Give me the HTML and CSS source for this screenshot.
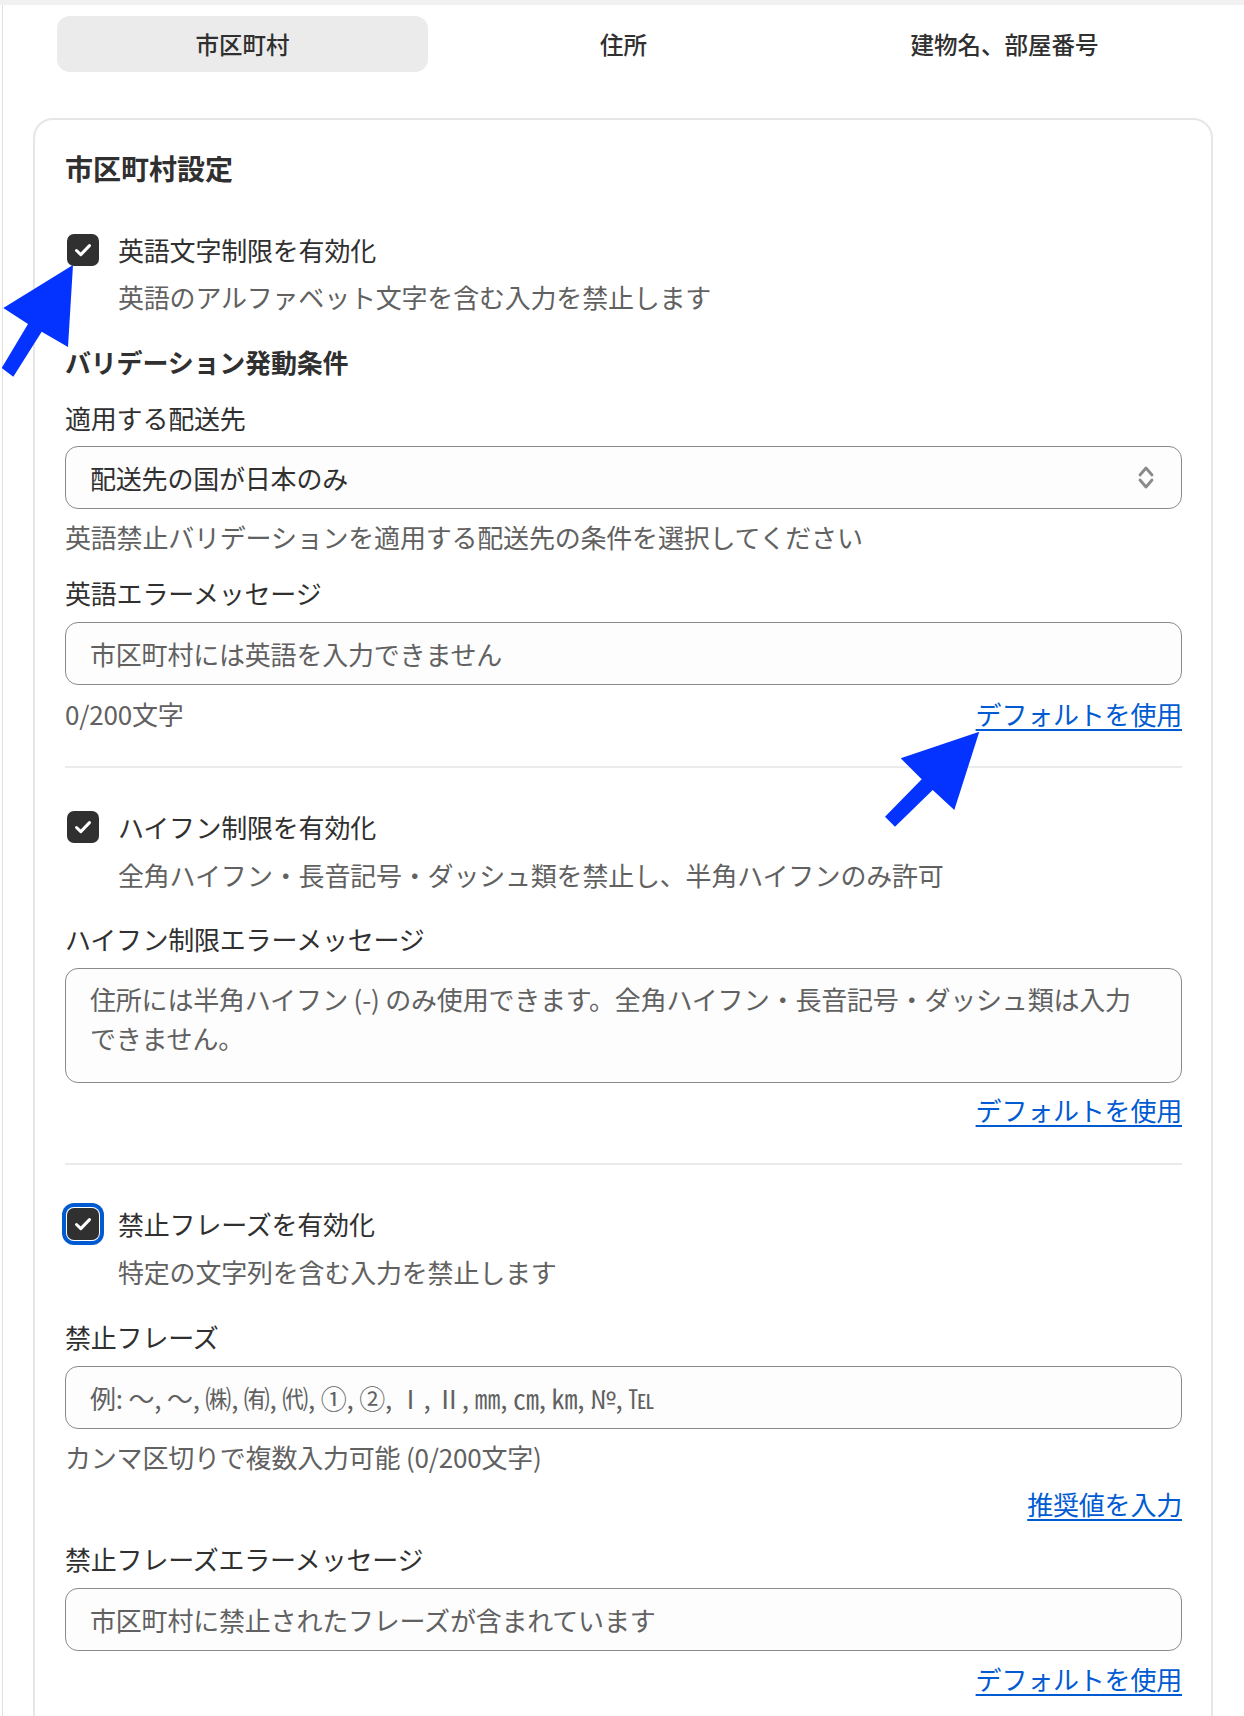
FILE: index.html
```html
<!DOCTYPE html>
<html lang="ja">
<head>
<meta charset="utf-8">
<title>市区町村設定</title>
<link rel="stylesheet" href="styles.css">
</head>
<body>
<div class="topband"></div>
<div class="panel">
  <div class="tabs">
    <div class="tab tab-active">市区町村</div>
    <div class="tab">住所</div>
    <div class="tab">建物名、部屋番号</div>
  </div>

  <div class="card">
    <h2 class="card-title">市区町村設定</h2>

    <div class="check-row mt-44">
      <span class="checkbox">
        <svg viewBox="0 0 32 32" width="32" height="32"><path d="M9.5 16.5 L13.8 20.6 L22.5 11.6" fill="none" stroke="#fff" stroke-width="3" stroke-linecap="round" stroke-linejoin="round"/></svg>
      </span>
      <span class="text">英語文字制限を有効化</span>
    </div>
    <div class="desc mt-11">英語のアルファベット文字を含む入力を禁止します</div>

    <div class="subhead mt-29">バリデーション発動条件</div>
    <div class="label mt-20">適用する配送先</div>
    <div class="control select mt-10">
      <span class="value">配送先の国が日本のみ</span>
      <svg class="chev" viewBox="0 0 16 25" width="16" height="25"><path d="M2 10 L8 3 L14 10 M2 15 L8 22 L14 15" fill="none" stroke="#8a8a8a" stroke-width="2.8" stroke-linecap="round" stroke-linejoin="round"/></svg>
    </div>
    <div class="help mt-10">英語禁止バリデーションを適用する配送先の条件を選択してください</div>

    <div class="label mt-20">英語エラーメッセージ</div>
    <div class="control input mt-11"><span class="ph">市区町村には英語を入力できません</span></div>
    <div class="meta-row mt-11">
      <span class="help">0/200文字</span>
      <a class="link" href="#">デフォルトを使用</a>
    </div>

    <div class="divider mt-34"></div>

    <div class="check-row mt-41">
      <span class="checkbox">
        <svg viewBox="0 0 32 32" width="32" height="32"><path d="M9.5 16.5 L13.8 20.6 L22.5 11.6" fill="none" stroke="#fff" stroke-width="3" stroke-linecap="round" stroke-linejoin="round"/></svg>
      </span>
      <span class="text">ハイフン制限を有効化</span>
    </div>
    <div class="desc mt-12">全角ハイフン・長音記号・ダッシュ類を禁止し、半角ハイフンのみ許可</div>

    <div class="label mt-28">ハイフン制限エラーメッセージ</div>
    <div class="control textarea mt-11"><span class="ph">住所には半角ハイフン (-) のみ使用できます。全角ハイフン・長音記号・ダッシュ類は入力<br>できません。</span></div>
    <div class="link-row mt-9"><a class="link" href="#">デフォルトを使用</a></div>

    <div class="divider mt-35"></div>

    <div class="check-row mt-41">
      <span class="checkbox focused">
        <svg viewBox="0 0 32 32" width="32" height="32"><path d="M9.5 16.5 L13.8 20.6 L22.5 11.6" fill="none" stroke="#fff" stroke-width="3" stroke-linecap="round" stroke-linejoin="round"/></svg>
      </span>
      <span class="text">禁止フレーズを有効化</span>
    </div>
    <div class="desc mt-12">特定の文字列を含む入力を禁止します</div>

    <div class="label mt-29">禁止フレーズ</div>
    <div class="control input mt-11"><span class="ph">例: ～, 〜, ㈱, ㈲, ㈹, ①, ②, Ⅰ, Ⅱ, ㎜, ㎝, ㎞, №, ℡</span></div>
    <div class="help mt-10">カンマ区切りで複数入力可能 (0/200文字)</div>
    <div class="link-row mt-11"><a class="link" href="#">推奨値を入力</a></div>

    <div class="label mt-19">禁止フレーズエラーメッセージ</div>
    <div class="control input mt-11"><span class="ph">市区町村に禁止されたフレーズが含まれています</span></div>
    <div class="link-row mt-10"><a class="link" href="#">デフォルトを使用</a></div>
  </div>
</div>

<svg class="annotations" viewBox="0 0 1244 1716" width="1244" height="1716">
  <polygon points="73,265 68,347 41.7,331.7 13.3,376.7 1.7,368 28,324 3.3,308" fill="#0433ff"/>
  <polygon points="979.3,731.7 954.3,810 932.7,790 895,826.7 885,816.7 921.7,779.3 900.7,758.3" fill="#0433ff"/>
</svg>
</body>
</html>
```

FILE: styles.css
```css
html, body {
  margin: 0;
  padding: 0;
  background: #ffffff;
}

body {
  font-family: "Noto Sans CJK JP", "Noto Sans", "Liberation Sans", sans-serif;
  color: #303030;
  font-size: 26px;
  line-height: 36px;
  letter-spacing: -0.2px;
  position: relative;
  overflow: hidden;
  height: 1716px;
}

.topband {
  height: 5px;
  background: #f1f1f1;
}

.panel {
  margin-left: 2px;
  border-left: 1px solid #e0e0e0;
  padding: 11px 0 0 30px;
  min-height: 1711px;
  box-sizing: border-box;
}

.tabs {
  margin-left: 24px;
  display: grid;
  grid-template-columns: 371px 371px 371px;
  column-gap: 10px;
}

.tab {
  height: 56px;
  border-radius: 13px;
  display: flex;
  align-items: center;
  justify-content: center;
  font-size: 23.5px;
  font-weight: 500;
  letter-spacing: 0;
  color: #303030;
}

.tab-active {
  background: #ebebeb;
}

.card {
  margin-top: 46px;
  width: 1180px;
  box-sizing: border-box;
  border: 2px solid #e6e6e6;
  border-radius: 20px;
  padding: 28px 29px 40px 30px;
}

.card-title {
  margin: 0;
  font-size: 28px;
  line-height: 40px;
  font-weight: 700;
  letter-spacing: 0;
  color: #303030;
}

.check-row {
  display: flex;
  align-items: center;
  height: 36px;
}

.checkbox {
  width: 32px;
  height: 32px;
  margin-left: 2px;
  margin-right: 19px;
  border-radius: 7px;
  background: #303030;
  display: flex;
  align-items: center;
  justify-content: center;
  flex: none;
}

.checkbox svg {
  display: block;
}

.checkbox.focused {
  box-shadow: 0 0 0 1px #ffffff, 0 0 0 5px #005bd3;
}

.desc {
  padding-left: 53px;
  color: #616161;
}

.subhead {
  font-weight: 700;
}

.label {
  color: #303030;
}

.help {
  color: #616161;
}

.control {
  box-sizing: border-box;
  border: 1px solid #8a8a8a;
  border-radius: 13px;
  background: #fdfdfd;
  padding-left: 24px;
}

.select {
  height: 63px;
  display: flex;
  align-items: center;
  justify-content: space-between;
  padding-right: 27px;
}

.select .value {
  color: #303030;
}

.chev {
  display: block;
}

.input {
  height: 63px;
  display: flex;
  align-items: center;
}

.textarea {
  height: 115px;
  padding-top: 10px;
  padding-right: 24px;
  line-height: 39px;
}

.ph {
  color: #616161;
}

.meta-row {
  display: flex;
  justify-content: space-between;
}

.link-row {
  display: flex;
  justify-content: flex-end;
}

.link {
  color: #005bd3;
  text-decoration: underline;
  text-underline-offset: 4px;
  text-decoration-thickness: 2px;
}

.divider {
  height: 2px;
  background: #ebebeb;
}

.annotations {
  position: absolute;
  left: 0;
  top: 0;
  pointer-events: none;
}

.mt-9 { margin-top: 9px; }
.mt-10 { margin-top: 10px; }
.mt-11 { margin-top: 11px; }
.mt-12 { margin-top: 12px; }
.mt-19 { margin-top: 19px; }
.mt-20 { margin-top: 20px; }
.mt-28 { margin-top: 28px; }
.mt-29 { margin-top: 29px; }
.mt-34 { margin-top: 34px; }
.mt-35 { margin-top: 35px; }
.mt-41 { margin-top: 41px; }
.mt-44 { margin-top: 44px; }
```
